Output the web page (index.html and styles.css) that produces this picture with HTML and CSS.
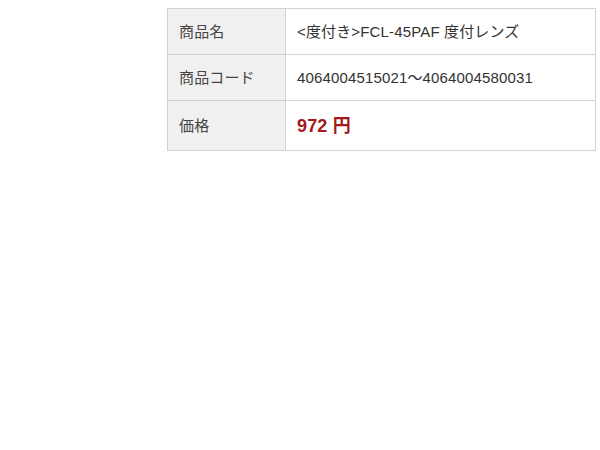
FILE: index.html
```html
<!DOCTYPE html>
<html lang="ja">
<head>
<meta charset="UTF-8">
<title>商品情報</title>
<link rel="stylesheet" href="styles.css">
</head>
<body>
<div class="page">
  <table class="spec">
    <tr>
      <th>商品名</th>
      <td>&lt;度付き&gt;FCL-45PAF 度付レンズ</td>
    </tr>
    <tr>
      <th>商品コード</th>
      <td>4064004515021～4064004580031</td>
    </tr>
    <tr class="price-row">
      <th>価格</th>
      <td><span class="price">972 円</span></td>
    </tr>
  </table>
</div>
</body>
</html>
```
FILE: styles.css
```css
body {
    margin: 0;
    background: #fff;
    font-family: "Liberation Sans", "Noto Sans CJK JP", sans-serif;
    color: #333;
}
.page {
    padding: 8px 4px 0 167px;
}
.spec {
    width: 429px;
    border-collapse: collapse;
    font-size: 15px;
    letter-spacing: 0.15px;
}
.spec th, .spec td {
    border: 1px solid #d2d2d2;
    text-align: left;
    font-weight: normal;
    padding: 0 11px 3px;
    height: 42px;
}
.spec th {
    width: 95px;
    background-color: #f0f0f0;
    color: #444;
}
.spec .price-row th,
.spec .price-row td {
    height: 46px;
}
.price {
    color: #a3191d;
    font-weight: bold;
    font-size: 18px;
}
```
